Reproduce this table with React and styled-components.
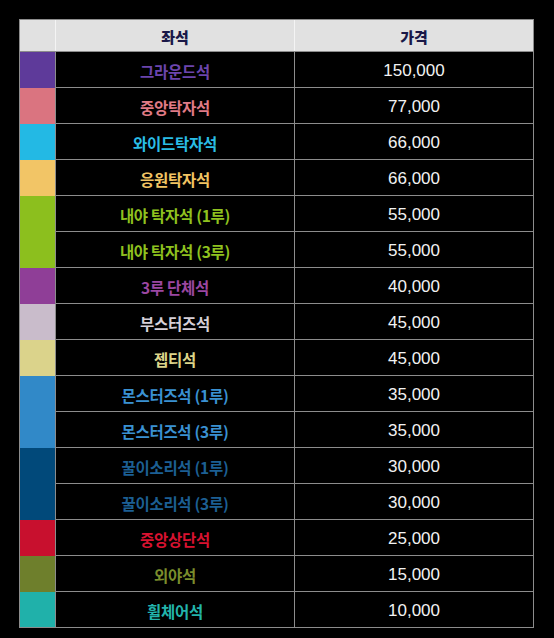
import React from "react";
import styled, { createGlobalStyle } from "styled-components";

const GlobalStyle = createGlobalStyle`
  html, body {
    margin: 0;
    padding: 0;
    background: #000;
  }
  body {
    font-family: "Liberation Sans", "Noto Sans CJK KR", sans-serif;
  }
`;

const Page = styled.div`
  width: 554px;
  height: 638px;
  background: #000;
  padding: 19px 0 0 19px;
  box-sizing: border-box;
`;

const Table = styled.div`
  width: 515px;
  box-sizing: border-box;
  border: 1px solid #8c8c8c;
  display: flex;
  flex-direction: column;
`;

const HeaderRow = styled.div`
  display: grid;
  grid-template-columns: 35px 239px 1fr;
  height: 32px;
  background: #e1e1e1;
  border-bottom: 1px solid #8c8c8c;
  box-sizing: border-box;
`;

const HeaderCell = styled.div`
  display: flex;
  align-items: center;
  justify-content: center;
  border-left: ${(p) => (p.$first ? "none" : "1px solid #f4f4f4")};
  font-family: "Noto Sans CJK KR", sans-serif;
  font-weight: 800;
  font-size: 15px;
  color: #1a1848;
  padding-top: 1px;
`;

const Row = styled.div`
  display: grid;
  grid-template-columns: 35px 239px 1fr;
  height: 36px;
  &:last-child {
    height: 35px;
  }
`;

const Swatch = styled.div`
  background: ${(p) => p.$color};
`;

const Cell = styled.div`
  display: flex;
  align-items: center;
  justify-content: center;
  border-left: 1px solid #8c8c8c;
  border-bottom: 1px solid #8c8c8c;
  box-sizing: border-box;
  ${Row}:last-child & {
    border-bottom: none;
  }
`;

const SeatName = styled.span`
  font-family: "Noto Sans CJK KR", sans-serif;
  font-weight: 700;
  font-size: 15.5px;
  color: ${(p) => p.$color};
  padding-top: 2px;
  letter-spacing: -0.3px;
`;

const Price = styled.span`
  font-family: "Liberation Sans", Arial, sans-serif;
  font-size: 17px;
  color: #f2f2f2;
  padding-top: 2px;
`;

const seats = [
  { name: "그라운드석", swatch: "#5e3a9a", text: "#6c45ad", price: "150,000" },
  { name: "중앙탁자석", swatch: "#da7480", text: "#e07b86", price: "77,000" },
  { name: "와이드탁자석", swatch: "#23b9e4", text: "#2abde6", price: "66,000" },
  { name: "응원탁자석", swatch: "#f2c566", text: "#f2c463", price: "66,000" },
  { name: "내야 탁자석 (1루)", swatch: "#8cbf1e", text: "#8fc21f", price: "55,000" },
  { name: "내야 탁자석 (3루)", swatch: "#8cbf1e", text: "#8fc21f", price: "55,000" },
  { name: "3루 단체석", swatch: "#8f3e97", text: "#9b47a2", price: "40,000" },
  { name: "부스터즈석", swatch: "#c9bccb", text: "#d6d0d8", price: "45,000" },
  { name: "젭티석", swatch: "#dbd38b", text: "#ddd58a", price: "45,000" },
  { name: "몬스터즈석 (1루)", swatch: "#3189c8", text: "#3a91d2", price: "35,000" },
  { name: "몬스터즈석 (3루)", swatch: "#3189c8", text: "#3a91d2", price: "35,000" },
  { name: "꿀이소리석 (1루)", swatch: "#01497a", text: "#1c5f93", price: "30,000" },
  { name: "꿀이소리석 (3루)", swatch: "#01497a", text: "#1c5f93", price: "30,000" },
  { name: "중앙상단석", swatch: "#c8102e", text: "#d81230", price: "25,000" },
  { name: "외야석", swatch: "#6e7f2c", text: "#7a8d2c", price: "15,000" },
  { name: "휠체어석", swatch: "#20b1aa", text: "#22b4ac", price: "10,000" },
];

export default function App() {
  return (
    <>
      <GlobalStyle />
      <Page>
        <Table>
          <HeaderRow>
            <HeaderCell $first />
            <HeaderCell>좌석</HeaderCell>
            <HeaderCell>가격</HeaderCell>
          </HeaderRow>
          {seats.map((s, i) => (
            <Row key={i}>
              <Swatch $color={s.swatch} />
              <Cell>
                <SeatName $color={s.text}>{s.name}</SeatName>
              </Cell>
              <Cell>
                <Price>{s.price}</Price>
              </Cell>
            </Row>
          ))}
        </Table>
      </Page>
    </>
  );
}
